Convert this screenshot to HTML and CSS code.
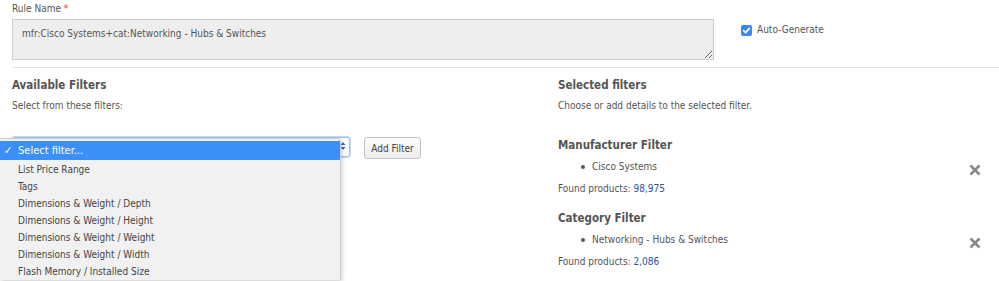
FILE: index.html
```html
<!DOCTYPE html>
<html lang="en">
<head>
    <meta charset="UTF-8">
    <title>Rule Filters</title>
    <link rel="stylesheet" href="styles.css">
</head>
<body>
    <div class="page">
        <div class="rule-row">
            <div class="rule-field">
                <label class="rule-label" for="ruleName">Rule Name <span class="required">*</span></label>
                <textarea id="ruleName" class="rule-input" readonly>mfr:Cisco Systems+cat:Networking - Hubs &amp; Switches</textarea>
            </div>
            <label class="auto-generate">
                <span class="checkbox">
                    <svg width="9" height="9" viewBox="0 0 9 9"><path d="M1.6 4.7 L3.6 6.6 L7.4 2.4" fill="none" stroke="#fff" stroke-width="1.6" stroke-linecap="round" stroke-linejoin="round"/></svg>
                </span>
                Auto-Generate
            </label>
        </div>

        <div class="filters">
            <div class="column available">
                <h3 class="col-title">Available Filters</h3>
                <p class="col-hint">Select from these filters:</p>

                <div class="select-row">
                    <div class="select-box">
                        <span class="select-arrows">
                            <svg width="6" height="10" viewBox="0 0 6 10"><path d="M0.5 4 L3 1 L5.5 4 Z M0.5 6 L3 9 L5.5 6 Z" fill="#3a6fb8"/></svg>
                        </span>
                    </div>
                    <button type="button" class="add-btn">Add Filter</button>

                    <ul class="dropdown">
                        <li class="option selected"><span class="tick">✓</span>Select filter...</li>
                        <li class="option">List Price Range</li>
                        <li class="option">Tags</li>
                        <li class="option">Dimensions &amp; Weight / Depth</li>
                        <li class="option">Dimensions &amp; Weight / Height</li>
                        <li class="option">Dimensions &amp; Weight / Weight</li>
                        <li class="option">Dimensions &amp; Weight / Width</li>
                        <li class="option">Flash Memory / Installed Size</li>
                    </ul>
                </div>
            </div>

            <div class="column selected-col">
                <h3 class="col-title">Selected filters</h3>
                <p class="col-hint">Choose or add details to the selected filter.</p>

                <div class="filter-block first">
                    <h3 class="col-title">Manufacturer Filter</h3>
                    <div class="filter-item">
                        <span class="item-text"><span class="dot"></span>Cisco Systems</span>
                        <span class="remove">
                            <svg width="14" height="14" viewBox="0 0 14 14"><path d="M2.5 2.5 L11.5 11.5 M11.5 2.5 L2.5 11.5" stroke="#888" stroke-width="2.6"/></svg>
                        </span>
                    </div>
                    <p class="found">Found products: <a href="#" class="count">98,975</a></p>
                </div>

                <div class="filter-block">
                    <h3 class="col-title">Category Filter</h3>
                    <div class="filter-item">
                        <span class="item-text"><span class="dot"></span>Networking - Hubs &amp; Switches</span>
                        <span class="remove">
                            <svg width="14" height="14" viewBox="0 0 14 14"><path d="M2.5 2.5 L11.5 11.5 M11.5 2.5 L2.5 11.5" stroke="#888" stroke-width="2.6"/></svg>
                        </span>
                    </div>
                    <p class="found">Found products: <a href="#" class="count">2,086</a></p>
                </div>
            </div>
        </div>
    </div>
</body>
</html>
```

FILE: styles.css
```css
body {
    margin: 0;
    font-family: "DejaVu Sans Condensed", "DejaVu Sans", sans-serif;
    font-size: 10px;
    color: #555;
    background: #fff;
}

.page {
    box-sizing: border-box;
    min-height: 281px;
    padding: 3px 0 0 12px;
}

/* top row */
.rule-row {
    display: flex;
    align-items: flex-start;
}

.rule-label {
    display: block;
    line-height: 12px;
    margin-bottom: 4px;
}

.required {
    color: #e2342b;
}

.rule-input {
    display: block;
    box-sizing: border-box;
    width: 702px;
    height: 41px;
    margin: 0;
    padding: 8px 9px 6px;
    border: 1px solid #ccc;
    background: #eee;
    font-family: inherit;
    font-size: 10px;
    line-height: 12px;
    color: #555;
    resize: vertical;
}

.auto-generate {
    display: flex;
    align-items: center;
    gap: 5px;
    margin: 21px 0 0 27px;
    line-height: 12px;
}

.checkbox {
    display: flex;
    align-items: center;
    justify-content: center;
    width: 11px;
    height: 11px;
    border-radius: 2px;
    background: #3b87ee;
}

/* two columns */
.filters {
    display: flex;
    margin-top: 7px;
    border-top: 1px solid #e4e4e4;
}

.column {
    padding-top: 10px;
}

.available {
    width: 546px;
}

.selected-col {
    flex: 1;
}

.col-title {
    margin: 0;
    font-size: 11.5px;
    line-height: 14px;
    font-weight: bold;
    color: #555;
}

.col-hint {
    margin: 8px 0 0;
    line-height: 12px;
}

/* select + button */
.select-row {
    position: relative;
    display: flex;
    align-items: flex-start;
    margin-top: 25px;
}

.select-box {
    box-sizing: border-box;
    width: 338px;
    height: 20px;
    border: 1px solid #9fc3ee;
    border-radius: 3px;
    box-shadow: 0 0 0 1px #c4dbf7;
    background: #fff;
    display: flex;
    justify-content: flex-end;
    align-items: center;
    padding-right: 3px;
}

.add-btn {
    box-sizing: border-box;
    width: 57px;
    height: 22px;
    margin-left: 14px;
    padding: 0;
    border: 1px solid #c2c2c2;
    border-radius: 3px;
    background: linear-gradient(#fdfdfd, #ececec);
    font-family: inherit;
    font-size: 10px;
    color: #444;
}

.dropdown {
    position: absolute;
    left: -12px;
    top: 1px;
    width: 340px;
    max-height: 139px;
    overflow: hidden;
    margin: 0;
    padding: 2px 0 0;
    list-style: none;
    background: #f1f1f1;
    border: 1px solid #cfcfcf;
    border-left: none;
    border-bottom: none;
    border-radius: 0 4px 0 0;
    box-shadow: 1px 2px 5px rgba(0, 0, 0, 0.2);
}

.option {
    height: 17px;
    line-height: 17px;
    padding-left: 18px;
    color: #444;
}

.option.selected {
    position: relative;
    height: 19px;
    line-height: 19px;
    margin-bottom: 1px;
    background: #3b8ff6;
    color: #fff;
    font-size: 11px;
}

.tick {
    position: absolute;
    left: 4px;
}

/* selected filters */
.filter-block {
    margin-top: 16px;
}

.filter-block.first {
    margin-top: 26px;
}

.filter-item {
    display: flex;
    justify-content: space-between;
    align-items: flex-start;
    margin-top: 9px;
    line-height: 12px;
    padding-right: 17px;
}

.item-text {
    display: flex;
    align-items: center;
    padding-left: 23px;
}

.dot {
    width: 4px;
    height: 4px;
    border-radius: 50%;
    background: #555;
    margin-right: 7px;
}

.remove {
    margin-top: 2px;
    margin-bottom: -4px;
    height: 14px;
}

.found {
    margin: 10px 0 0;
    line-height: 12px;
}

.count {
    color: #2b52a8;
    text-decoration: none;
}
```
